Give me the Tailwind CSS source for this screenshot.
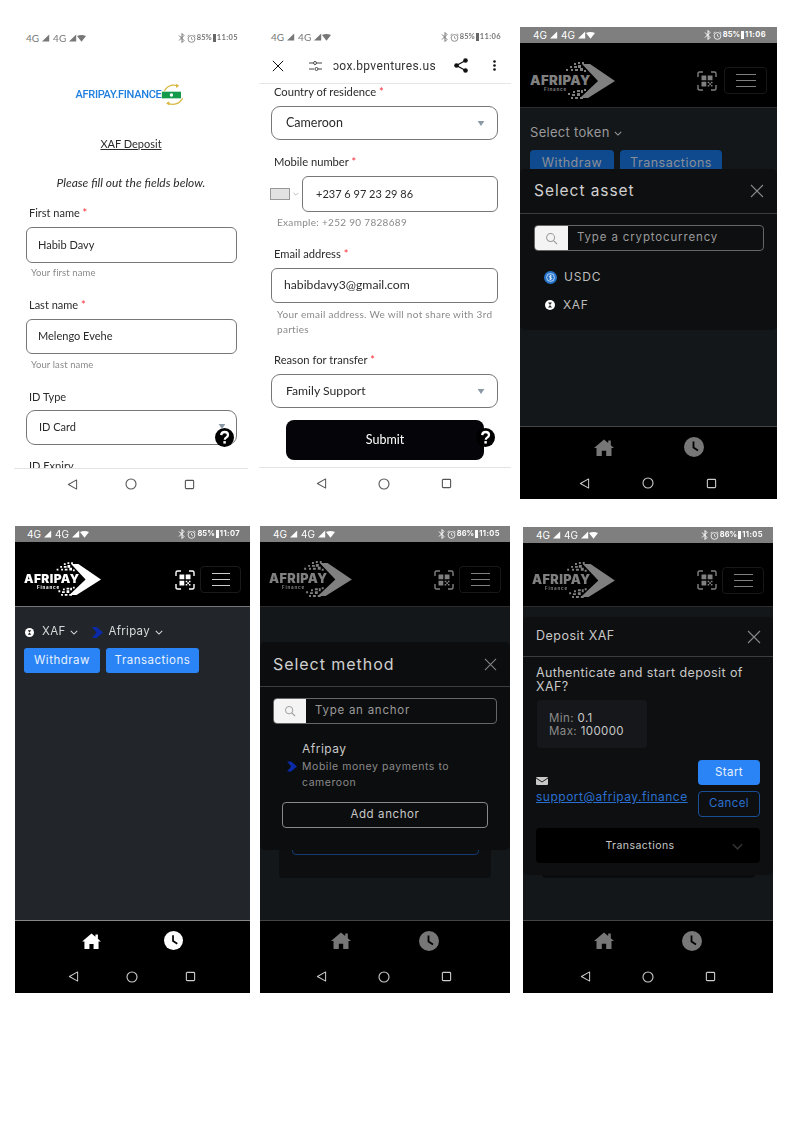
<!DOCTYPE html>
<html lang="en">
<head>
<meta charset="UTF-8">
<title>Afripay deposit flow</title>
<script src="https://cdn.jsdelivr.net/npm/@tailwindcss/browser@4"></script>
</head>
<body class="bg-white font-['Inter',sans-serif]">
<!-- shared icons -->
<svg class="hidden">
  <symbol id="sig" viewBox="0 0 10 9"><path d="M9 0v9H0z" fill="currentColor"/></symbol>
  <symbol id="wifi" viewBox="0 0 11 8"><path d="M0 1q5.500-2.500 11 0L5.500 8z" fill="currentColor"/></symbol>
  <symbol id="bt" viewBox="0 0 8 10"><path d="M1 2.500l5 5L4 9.500v-9l2 2-5 5" fill="none" stroke="currentColor" stroke-width="1"/></symbol>
  <symbol id="alarm" viewBox="0 0 10 10"><circle cx="5" cy="5.500" r="3.800" fill="none" stroke="currentColor" stroke-width=".9"/><path d="M5 3.500v2.200l1.500 .8M.5 2.500L2.500 .8M9.500 2.500L7.500 .8" fill="none" stroke="currentColor" stroke-width=".8"/></symbol>
  <symbol id="back" viewBox="0 0 12 12"><path d="M10.500 1v10L1.500 6z" fill="none" stroke="currentColor" stroke-width="1.100" stroke-linejoin="round"/></symbol>
  <symbol id="round" viewBox="0 0 12 12"><circle cx="6" cy="6" r="5" fill="none" stroke="currentColor" stroke-width="1.100"/></symbol>
  <symbol id="square" viewBox="0 0 12 12"><rect x="1.500" y="1.500" width="9" height="9" rx="1" fill="none" stroke="currentColor" stroke-width="1.200"/></symbol>
  <symbol id="home" viewBox="0 0 20 17"><path d="M10 .5L0 9h2.500v8h5.300v-5.300h4.400V17h5.300V9H20l-3.200-2.800V1.500h-2.600v2.400z" fill="currentColor"/></symbol>
  <symbol id="clock" viewBox="0 0 20 20"><circle cx="10" cy="10" r="10" fill="currentColor"/><path d="M9.500 4.500v6l4.500 3" fill="none" stroke="#000" stroke-width="1.800"/></symbol>
  <symbol id="close" viewBox="0 0 14 14"><path d="M1 1l12 12M13 1L1 13" fill="none" stroke="currentColor" stroke-width="1.100"/></symbol>
  <symbol id="search" viewBox="0 0 14 14"><circle cx="6" cy="6" r="4.300" fill="none" stroke="currentColor" stroke-width="1.100"/><path d="M9.200 9.200L13 13" stroke="currentColor" stroke-width="1.200"/></symbol>
  <symbol id="chev" viewBox="0 0 10 6"><path d="M1 1l4 4 4-4" fill="none" stroke="currentColor" stroke-width="1.300"/></symbol>
  <symbol id="caret" viewBox="0 0 8 6"><path d="M0 0h8L4 6z" fill="currentColor"/></symbol>
  <symbol id="anchor" viewBox="0 0 12 12"><path d="M0 0h5l7 6-7 6H0l5-6z" fill="#0b2aa8"/></symbol>
  <symbol id="help" viewBox="0 0 20 20"><circle cx="10" cy="10" r="10" fill="#000"/><path d="M6.500 7.500q.3-3.300 3.700-3.300t3.500 3q0 1.800-1.800 2.800-1.600 .9-1.600 2.400" fill="none" stroke="#fff" stroke-width="2.400"/><rect x="8.800" y="13.800" width="2.600" height="2.600" fill="#fff"/></symbol>
  <symbol id="xaf" viewBox="0 0 10 10"><circle cx="5" cy="5" r="5" fill="#fff"/><path d="M3 2.500h4L3 7.500h4z" fill="#222"/></symbol>
  <symbol id="usdc" viewBox="0 0 12 12"><circle cx="6" cy="6" r="6" fill="#2775ca"/><circle cx="6" cy="6" r="3.600" fill="none" stroke="#cfe0f5" stroke-width=".8"/><path d="M7.200 4.700Q6 4 5 4.800t1 1.200 1 1.300-2.300 0M6 3.500v5" fill="none" stroke="#fff" stroke-width=".6"/></symbol>
  <symbol id="qr" viewBox="0 0 20 20">
    <path d="M1 6V2.500Q1 1 2.500 1H6M14 1h3.500Q19 1 19 2.500V6M19 14v3.500q0 1.500-1.500 1.500H14M6 19H2.500Q1 19 1 17.500V14" fill="none" stroke="currentColor" stroke-width="1.400"/>
    <path d="M4.500 4.500h4.800v4.800H4.500zM10.700 4.500h4.800v4.800h-4.800zM4.500 10.700h4.800v4.800H4.500zM10.700 10.700h1.600v1.600h-1.600zM13.900 10.700h1.600v1.600h-1.600zM12.300 12.300h1.600v1.600h-1.600zM10.700 13.900h1.600v1.600h-1.600zM13.900 13.900h1.600v1.600h-1.600z" fill="currentColor"/>
  </symbol>
  <symbol id="arrow" viewBox="0 0 85 38">
    <path d="M52 2h8l25 17-27 17h-8l18-17z" fill="currentColor"/>
    <path d="M44 1h2v2h-2zM48 0h2v2h-2zM52 0h2v2h-2zM40 4h2v2h-2zM44 4h3v2h-3zM48 3h3v3h-3zM36 7h2v2h-2zM41 7h2v2h-2zM45 7h3v2h-3zM50 6h3v3h-3zM54 8h2v2h-2zM47 28h3v2h-3zM43 29h2v2h-2zM38 31h2v2h-2zM42 32h3v2h-3zM47 31h3v3h-3zM51 28h2v3h-2zM45 35h3v2h-3zM50 35h3v2h-3zM41 35h2v2h-2zM54 27h2v2h-2z" fill="currentColor"/>
  </symbol>
</svg>

<div class="w-[794px] h-[1123px] pt-[26px] overflow-hidden blur-[0.45px]">
  <!-- top row -->
  <div class="flex items-start h-[500px]">

    <!-- phone 1: deposit form -->
    <section class="ml-[14px] w-[234px] h-[473px] flex flex-col bg-white relative font-['Lato',sans-serif] text-[#2b2b2b]">
      <div class="h-6 shrink-0 flex items-center justify-between pl-[12px] pr-[10px] text-[#777]">
        <div class="flex items-center gap-[3px] text-[10px]"><span>4G</span><svg class="w-2 h-2"><use href="#sig"/></svg><span>4G</span><svg class="w-2 h-2"><use href="#sig"/></svg><svg class="w-[9px] h-[7px] -ml-[3px]"><use href="#wifi"/></svg></div>
        <div class="flex items-center gap-[1px] text-[7.500px] font-bold"><svg class="w-[8px] h-[10px]"><use href="#bt"/></svg><svg class="w-[9px] h-[9px]"><use href="#alarm"/></svg><span>85%</span><span class="w-[3px] h-[8px] bg-[#666]"></span><span class="tracking-[0.4px]">11:05</span></div>
      </div>
      <div class="flex-1 overflow-hidden">
        <div class="mt-[30px] h-[30px] flex items-center justify-center">
          <span class="font-['Roboto',sans-serif] font-medium text-[11px] text-[#1f7fe0] tracking-[-0.3px]">AFRIPAY.FINANCE</span>
          <svg class="w-[25px] h-[26px]" viewBox="0 0 30 28"><path d="M4 9Q10 0 20 3M26 18Q20 28 8 24" fill="none" stroke="#d9b843" stroke-width="1.500"/><path d="M18 .5l4 2.500-4 2.500zM10 21.500L6 24l4 2.500z" fill="#d9b843"/><rect x="1" y="10" width="23" height="8" fill="#149a4b"/><circle cx="12.500" cy="14" r="2" fill="#fff"/></svg>
        </div>
        <p class="mt-[26px] h-4 leading-4 text-center text-[11px] underline">XAF Deposit</p>
        <p class="mt-[23px] h-4 leading-4 text-center text-[12px] italic">Please fill out the fields below.</p>
        <p class="mt-[14px] ml-[15px] h-4 leading-4 text-[11px]">First name <span class="text-red-500">*</span></p>
        <div class="mt-[6px] ml-[12px] w-[211px] h-[36px] rounded-[6px] border border-[#777] flex items-center pl-[11px] text-[11px]">Habib Davy</div>
        <p class="mt-[2px] ml-[17px] h-4 leading-4 text-[9.500px] text-[#8a8a8a] tracking-[0.1px]">Your first name</p>
        <p class="mt-[16px] ml-[15px] h-4 leading-4 text-[11px]">Last name <span class="text-red-500">*</span></p>
        <div class="mt-[6px] ml-[12px] w-[211px] h-[35px] rounded-[6px] border border-[#777] flex items-center pl-[11px] text-[11px]">Melengo Evehe</div>
        <p class="mt-[3px] ml-[17px] h-4 leading-4 text-[9.500px] text-[#8a8a8a] tracking-[0.1px]">Your last name</p>
        <p class="mt-[16px] ml-[15px] h-4 leading-4 text-[11px]">ID Type</p>
        <div class="mt-[5px] ml-[12px] w-[211px] h-[35px] rounded-[9px] border border-[#777] flex items-center pl-[12px] text-[11px]">ID Card</div>
        <p class="mt-[13px] ml-[15px] h-4 leading-4 text-[11px]">ID Expiry</p>
      </div>
      <footer class="h-[31px] shrink-0 border-t border-[#e4e4e4] flex items-center pl-[53px] gap-[47px] text-[#555]">
        <svg class="w-[11px] h-[11px]"><use href="#back"/></svg><svg class="w-[12px] h-[12px]"><use href="#round"/></svg><svg class="w-[11px] h-[11px]"><use href="#square"/></svg>
      </footer>
      <svg class="absolute left-[201px] top-[402px] w-[19px] h-[19px]"><use href="#help"/></svg>
      <svg class="absolute left-[204px] top-[398px] w-[8px] h-[5px] text-[#8a97a5]"><use href="#caret"/></svg>
    </section>

    <!-- phone 2: deposit form, scrolled -->
    <section class="ml-[11px] w-[252px] h-[473px] flex flex-col bg-white relative font-['Lato',sans-serif] text-[#2b2b2b]">
      <div class="h-[22px] shrink-0 flex items-center justify-between pl-[12px] pr-[10px] text-[#777]">
        <div class="flex items-center gap-[3px] text-[10px]"><span>4G</span><svg class="w-2 h-2"><use href="#sig"/></svg><span>4G</span><svg class="w-2 h-2"><use href="#sig"/></svg><svg class="w-[9px] h-[7px] -ml-[3px]"><use href="#wifi"/></svg></div>
        <div class="flex items-center gap-[1px] text-[7.500px] font-bold"><svg class="w-[8px] h-[10px]"><use href="#bt"/></svg><svg class="w-[9px] h-[9px]"><use href="#alarm"/></svg><span>85%</span><span class="w-[3px] h-[8px] bg-[#666]"></span><span class="tracking-[0.4px]">11:06</span></div>
      </div>
      <div class="h-[36px] shrink-0 border-b border-[#e6e6e6] flex items-center pl-[13px] pr-[15px] text-[#333]">
        <svg class="w-[12px] h-[12px] text-black"><use href="#close"/></svg>
        <svg class="ml-[25px] w-[13px] h-[10px]" viewBox="0 0 13 10"><path d="M0 2h4M8 2h5M0 8h5M9 8h4" stroke="#444" fill="none"/><circle cx="6" cy="2" r="1.500" fill="none" stroke="#444"/><circle cx="7.500" cy="8" r="1.500" fill="none" stroke="#444"/></svg>
        <span class="ml-[11px] text-[12px] font-['Roboto',sans-serif] tracking-[0.35px]">ɔox.bpventures.us</span>
        <svg class="ml-[17px] w-[16px] h-[15px]" viewBox="0 0 15 15"><path d="M12 2.500L3 7.500l9 5" stroke="#111" stroke-width="1.300" fill="none"/><circle cx="12" cy="2.500" r="2.300" fill="#111"/><circle cx="3" cy="7.500" r="2.300" fill="#111"/><circle cx="12" cy="12.500" r="2.300" fill="#111"/></svg>
        <svg class="ml-auto w-[3px] h-[11px]" viewBox="0 0 3 11"><circle cx="1.500" cy="1.500" r="1.300" fill="#111"/><circle cx="1.500" cy="5.500" r="1.300" fill="#111"/><circle cx="1.500" cy="9.500" r="1.300" fill="#111"/></svg>
      </div>
      <div class="flex-1 overflow-hidden">
        <p class="ml-[15px] h-4 leading-4 text-[11.200px]">Country of residence <span class="text-red-500">*</span></p>
        <div class="mt-[6px] ml-[12px] w-[227px] h-[34px] rounded-[9px] border border-[#777] flex items-center justify-between pl-[14px] pr-[12px] text-[12.500px]">Cameroon<svg class="w-[8px] h-[5px] text-[#8a97a5]"><use href="#caret"/></svg></div>
        <p class="mt-[14px] ml-[15px] h-4 leading-4 text-[11.200px]">Mobile number <span class="text-red-500">*</span></p>
        <div class="mt-[6px] ml-[11px] h-[36px] flex items-center">
          <span class="w-[20px] h-[12px] bg-[#e2e2e2] border border-[#999]"></span>
          <svg class="ml-[3px] w-[6px] h-[4px] text-[#aaa]"><use href="#chev"/></svg>
          <div class="ml-[3px] w-[196px] h-[36px] rounded-[6px] border border-[#777] flex items-center pl-[13px] text-[11px]">+237 6 97 23 29 86</div>
        </div>
        <p class="mt-[2px] ml-[18px] h-4 leading-4 text-[10px] text-[#8a8a8a] tracking-[0.3px]">Example: +252 90 7828689</p>
        <p class="mt-[16px] ml-[15px] h-4 leading-4 text-[11.200px]">Email address <span class="text-red-500">*</span></p>
        <div class="mt-[6px] ml-[12px] w-[227px] h-[35px] rounded-[6px] border border-[#777] flex items-center pl-[12px] text-[12.200px]">habibdavy3@gmail.com</div>
        <p class="mt-[4px] ml-[18px] w-[224px] leading-[15px] text-[10px] text-[#8a8a8a] tracking-[0.3px]">Your email address. We will not share with 3rd parties</p>
        <p class="mt-[15px] ml-[15px] h-4 leading-4 text-[11.200px]">Reason for transfer <span class="text-red-500">*</span></p>
        <div class="mt-[6px] ml-[12px] w-[227px] h-[34px] rounded-[9px] border border-[#777] flex items-center justify-between pl-[14px] pr-[12px] text-[12.200px]">Family Support<svg class="w-[8px] h-[5px] text-[#8a97a5]"><use href="#caret"/></svg></div>
        <div class="mt-[12px] ml-[27px] w-[198px] h-[40px] rounded-[8px] bg-[#050509] text-white flex items-center justify-center text-[12.500px]">Submit</div>
      </div>
      <footer class="h-[32px] shrink-0 border-t border-[#e4e4e4] flex items-center pl-[57px] gap-[51px] text-[#555]">
        <svg class="w-[11px] h-[11px]"><use href="#back"/></svg><svg class="w-[12px] h-[12px]"><use href="#round"/></svg><svg class="w-[11px] h-[11px]"><use href="#square"/></svg>
      </footer>
      <svg class="absolute left-[217px] top-[402px] w-[19px] h-[19px]"><use href="#help"/></svg>
    </section>

    <!-- phone 3: select asset -->
    <section class="mt-[1px] ml-[9px] w-[257px] h-[472px] flex flex-col bg-[#14171a] text-[#9a9a9a]">
      <div class="h-4 shrink-0 bg-[#7f7f7f] text-white flex items-center justify-between pl-[13px] pr-[11px]">
        <div class="flex items-center gap-[3px] text-[10px]"><span>4G</span><svg class="w-2 h-2"><use href="#sig"/></svg><span>4G</span><svg class="w-2 h-2"><use href="#sig"/></svg><svg class="w-[9px] h-[7px] -ml-[3px]"><use href="#wifi"/></svg></div>
        <div class="flex items-center gap-[1px] text-[7.500px] font-bold"><svg class="w-[8px] h-[10px]"><use href="#bt"/></svg><svg class="w-[9px] h-[9px]"><use href="#alarm"/></svg><span>85%</span><span class="w-[3px] h-[8px] bg-white"></span><span class="tracking-[0.4px]">11:06</span></div>
      </div>
      <header class="h-[65px] shrink-0 bg-black border-b border-[#2c2c2c] flex items-center pt-[11px] pl-[10px] pr-[10px]">
        <div class="relative w-[85px] h-[38px] text-[#808080]"><svg class="absolute inset-0 w-[85px] h-[38px]"><use href="#arrow"/></svg><span class="absolute left-0 top-[11px] text-[13.200px] leading-[14px] font-black tracking-[0.4px]">AFRIPAY</span><span class="absolute left-[14px] top-[25px] text-[4.500px] leading-[6px] font-bold tracking-[0.8px]">Finance</span></div>
        <svg class="ml-auto w-[20px] h-[20px] text-[#808080]"><use href="#qr"/></svg>
        <span class="ml-[7px] w-[43px] h-[27px] rounded-[4px] border border-[#181818] flex flex-col items-center justify-center gap-[5px]"><i class="block w-[20px] h-px bg-[#808080]"></i><i class="block w-[20px] h-px bg-[#808080]"></i><i class="block w-[20px] h-px bg-[#808080]"></i></span>
      </header>
      <main class="flex-1 relative overflow-hidden">
        <div class="ml-[10px] mt-[17px] h-4 flex items-center gap-[4px] text-[13px] tracking-[0.3px]">Select token<svg class="w-[8px] h-[5px]"><use href="#chev"/></svg></div>
        <div class="ml-[10px] mt-[9px] flex gap-[6px] text-[12.500px] tracking-[0.5px] text-[#8a8f96]">
          <span class="w-[84px] h-[26px] rounded-[4px] bg-[#0f4a8f] flex items-center justify-center">Withdraw</span>
          <span class="w-[102px] h-[26px] rounded-[4px] bg-[#0f4a8f] flex items-center justify-center">Transactions</span>
        </div>
        <!-- modal -->
        <div class="absolute left-0 right-0 top-[61px] h-[161px] bg-[#0e0f10] rounded-[5px]">
          <div class="h-[45px] border-b border-[#3d3d3d] flex items-center justify-between pl-[14px] pr-[13px] text-[15.500px] text-[#d0d0d0] tracking-[0.95px]">Select asset<svg class="w-[14px] h-[14px] text-[#888]"><use href="#close"/></svg></div>
          <div class="mt-[11px] ml-[14px] w-[230px] h-[26px] flex rounded-[4px] border border-[#666] overflow-hidden">
            <span class="w-[33px] bg-[#f4f4f4] flex items-center justify-center text-[#999]"><svg class="w-[13px] h-[13px]"><use href="#search"/></svg></span>
            <span class="pl-[9px] flex items-center text-[11.500px] tracking-[0.85px] text-[#9a9a9a]">Type a cryptocurrency</span>
          </div>
          <div class="mt-[12px] ml-[24px] h-[28px] flex items-center gap-[7px] text-[12px] tracking-[0.8px] text-[#bdbdbd]"><svg class="w-[13px] h-[13px]"><use href="#usdc"/></svg>USDC</div>
          <div class="ml-[25px] h-[28px] flex items-center gap-[8px] text-[12px] tracking-[0.6px] text-[#bdbdbd]"><svg class="w-[10px] h-[10px]"><use href="#xaf"/></svg>XAF</div>
        </div>
      </main>
      <footer class="h-[73px] shrink-0 bg-black border-t border-[#444] text-[#777]">
        <div class="h-[40px] flex items-center pl-[74px] gap-[70px]"><svg class="w-[20px] h-[17px]"><use href="#home"/></svg><svg class="w-[20px] h-[20px]"><use href="#clock"/></svg></div>
        <div class="h-[32px] flex items-center pl-[59px] gap-[52px] text-[#ccc]"><svg class="w-[11px] h-[11px]"><use href="#back"/></svg><svg class="w-[12px] h-[12px]"><use href="#round"/></svg><svg class="w-[11px] h-[11px]"><use href="#square"/></svg></div>
      </footer>
    </section>
  </div>

  <!-- bottom row -->
  <div class="flex items-start">

    <!-- phone 4: wallet home -->
    <section class="ml-[15px] w-[235px] h-[467px] flex flex-col bg-[#22262b] text-[#d8d8d8]">
      <div class="h-4 shrink-0 bg-[#7a7a7a] text-white flex items-center justify-between pl-[12px] pr-[10px]">
        <div class="flex items-center gap-[3px] text-[10px]"><span>4G</span><svg class="w-2 h-2"><use href="#sig"/></svg><span>4G</span><svg class="w-2 h-2"><use href="#sig"/></svg><svg class="w-[9px] h-[7px] -ml-[3px]"><use href="#wifi"/></svg></div>
        <div class="flex items-center gap-[1px] text-[7.500px] font-bold"><svg class="w-[8px] h-[10px]"><use href="#bt"/></svg><svg class="w-[9px] h-[9px]"><use href="#alarm"/></svg><span>85%</span><span class="w-[3px] h-[8px] bg-white"></span><span class="tracking-[0.4px]">11:07</span></div>
      </div>
      <header class="h-[65px] shrink-0 bg-black border-b border-[#777] flex items-center pt-[11px] pl-[9px] pr-[9px]">
        <div class="relative w-[77px] h-[35px] text-white"><svg class="absolute inset-0 w-[77px] h-[35px]"><use href="#arrow"/></svg><span class="absolute left-0 top-[10px] text-[12px] leading-[14px] font-black tracking-[0.4px]">AFRIPAY</span><span class="absolute left-[13px] top-[23px] text-[4.500px] leading-[6px] font-bold tracking-[0.8px]">Finance</span></div>
        <svg class="ml-auto w-[20px] h-[20px] text-white"><use href="#qr"/></svg>
        <span class="ml-[5px] w-[41px] h-[27px] rounded-[4px] border border-[#1a1a1a] flex flex-col items-center justify-center gap-[5px]"><i class="block w-[18px] h-px bg-[#ccc]"></i><i class="block w-[18px] h-px bg-[#ccc]"></i><i class="block w-[18px] h-px bg-[#ccc]"></i></span>
      </header>
      <main class="flex-1">
        <div class="ml-[10px] mt-[17px] h-4 flex items-center text-[11.500px] tracking-[0.3px]">
          <svg class="w-[9px] h-[9px]"><use href="#xaf"/></svg><span class="ml-[8px]">XAF</span><svg class="ml-[5px] w-[8px] h-[5px]"><use href="#chev"/></svg>
          <svg class="ml-[14px] w-[11px] h-[13px]"><use href="#anchor"/></svg><span class="ml-[5px]">Afripay</span><svg class="ml-[5px] w-[8px] h-[5px]"><use href="#chev"/></svg>
        </div>
        <div class="ml-[9px] mt-[8px] flex gap-[6px] text-[11.500px] tracking-[0.5px] text-[#e8f1ff]">
          <span class="w-[76px] h-[25px] rounded-[3px] bg-[#2a84f5] flex items-center justify-center">Withdraw</span>
          <span class="w-[93px] h-[25px] rounded-[3px] bg-[#2a84f5] flex items-center justify-center">Transactions</span>
        </div>
      </main>
      <footer class="h-[73px] shrink-0 bg-black border-t border-[#888] text-white">
        <div class="h-[39px] flex items-center pl-[67px] gap-[63px]"><svg class="w-[19px] h-[16px]"><use href="#home"/></svg><svg class="w-[19px] h-[19px]"><use href="#clock"/></svg></div>
        <div class="h-[33px] flex items-center pl-[53px] gap-[47px] text-[#ccc]"><svg class="w-[11px] h-[11px]"><use href="#back"/></svg><svg class="w-[12px] h-[12px]"><use href="#round"/></svg><svg class="w-[11px] h-[11px]"><use href="#square"/></svg></div>
      </footer>
    </section>

    <!-- phone 5: select method -->
    <section class="ml-[10px] w-[250px] h-[467px] flex flex-col bg-[#14171a] text-[#9a9a9a]">
      <div class="h-4 shrink-0 bg-[#7f7f7f] text-white flex items-center justify-between pl-[13px] pr-[10px]">
        <div class="flex items-center gap-[3px] text-[10px]"><span>4G</span><svg class="w-2 h-2"><use href="#sig"/></svg><span>4G</span><svg class="w-2 h-2"><use href="#sig"/></svg><svg class="w-[9px] h-[7px] -ml-[3px]"><use href="#wifi"/></svg></div>
        <div class="flex items-center gap-[1px] text-[7.500px] font-bold"><svg class="w-[8px] h-[10px]"><use href="#bt"/></svg><svg class="w-[9px] h-[9px]"><use href="#alarm"/></svg><span>86%</span><span class="w-[3px] h-[8px] bg-white"></span><span class="tracking-[0.4px]">11:05</span></div>
      </div>
      <header class="h-[65px] shrink-0 bg-black border-b border-[#2c2c2c] flex items-center pt-[11px] pl-[9px] pr-[9px]">
        <div class="relative w-[83px] h-[37px] text-[#808080]"><svg class="absolute inset-0 w-[83px] h-[37px]"><use href="#arrow"/></svg><span class="absolute left-0 top-[11px] text-[12.700px] leading-[14px] font-black tracking-[0.4px]">AFRIPAY</span><span class="absolute left-[13px] top-[24px] text-[4.500px] leading-[6px] font-bold tracking-[0.8px]">Finance</span></div>
        <svg class="ml-auto w-[20px] h-[20px] text-[#808080]"><use href="#qr"/></svg>
        <span class="ml-[5px] w-[42px] h-[27px] rounded-[4px] border border-[#181818] flex flex-col items-center justify-center gap-[5px]"><i class="block w-[19px] h-px bg-[#808080]"></i><i class="block w-[19px] h-px bg-[#808080]"></i><i class="block w-[19px] h-px bg-[#808080]"></i></span>
      </header>
      <main class="flex-1 relative overflow-hidden">
        <!-- card behind the modal -->
        <div class="absolute left-[19px] top-[200px] w-[212px] h-[71px] rounded-[4px] bg-[#0c0e10]"></div>
        <div class="absolute left-[32px] top-[229px] w-[187px] h-[19px] rounded-[4px] border border-[#123a70]"></div>
        <!-- modal -->
        <div class="absolute left-0 right-0 top-[35px] h-[208px] bg-[#0c0d0e] rounded-[5px]">
          <div class="h-[45px] border-b border-[#3d3d3d] flex items-center justify-between pl-[13px] pr-[13px] text-[16px] text-[#d0d0d0] tracking-[0.95px]">Select method<svg class="w-[13px] h-[13px] text-[#888]"><use href="#close"/></svg></div>
          <div class="mt-[11px] ml-[13px] w-[224px] h-[26px] flex rounded-[4px] border border-[#666] overflow-hidden">
            <span class="w-[32px] bg-[#f4f4f4] flex items-center justify-center text-[#999]"><svg class="w-[12px] h-[12px]"><use href="#search"/></svg></span>
            <span class="pl-[9px] flex items-center text-[11.500px] tracking-[0.75px] text-[#9a9a9a]">Type an anchor</span>
          </div>
          <div class="mt-[17px] ml-[27px] flex items-center gap-[5px]">
            <svg class="w-[10px] h-[11px]"><use href="#anchor"/></svg>
            <div>
              <p class="text-[12px] leading-[16px] tracking-[0.5px] text-[#c8c8c8]">Afripay</p>
              <p class="w-[175px] mt-[2px] text-[10.500px] leading-[16px] tracking-[0.55px] text-[#8a8a8a]">Mobile money payments to cameroon</p>
            </div>
          </div>
          <div class="mt-[11px] ml-[22px] w-[206px] h-[26px] rounded-[4px] border border-[#888] flex items-center justify-center text-[11.500px] tracking-[0.6px] text-[#c8c8c8]">Add anchor</div>
        </div>
      </main>
      <footer class="h-[73px] shrink-0 bg-black border-t border-[#444] text-[#777]">
        <div class="h-[39px] flex items-center pl-[71px] gap-[68px]"><svg class="w-[20px] h-[17px]"><use href="#home"/></svg><svg class="w-[20px] h-[20px]"><use href="#clock"/></svg></div>
        <div class="h-[33px] flex items-center pl-[56px] gap-[51px] text-[#ccc]"><svg class="w-[11px] h-[11px]"><use href="#back"/></svg><svg class="w-[12px] h-[12px]"><use href="#round"/></svg><svg class="w-[11px] h-[11px]"><use href="#square"/></svg></div>
      </footer>
    </section>

    <!-- phone 6: deposit dialog -->
    <section class="mt-[1px] ml-[13px] w-[250px] h-[466px] flex flex-col bg-[#14171a] text-[#9a9a9a]">
      <div class="h-4 shrink-0 bg-[#7f7f7f] text-white flex items-center justify-between pl-[13px] pr-[10px]">
        <div class="flex items-center gap-[3px] text-[10px]"><span>4G</span><svg class="w-2 h-2"><use href="#sig"/></svg><span>4G</span><svg class="w-2 h-2"><use href="#sig"/></svg><svg class="w-[9px] h-[7px] -ml-[3px]"><use href="#wifi"/></svg></div>
        <div class="flex items-center gap-[1px] text-[7.500px] font-bold"><svg class="w-[8px] h-[10px]"><use href="#bt"/></svg><svg class="w-[9px] h-[9px]"><use href="#alarm"/></svg><span>86%</span><span class="w-[3px] h-[8px] bg-white"></span><span class="tracking-[0.4px]">11:05</span></div>
      </div>
      <header class="h-[64px] shrink-0 bg-black border-b border-[#2c2c2c] flex items-center pt-[11px] pl-[9px] pr-[9px]">
        <div class="relative w-[83px] h-[37px] text-[#808080]"><svg class="absolute inset-0 w-[83px] h-[37px]"><use href="#arrow"/></svg><span class="absolute left-0 top-[11px] text-[12.700px] leading-[14px] font-black tracking-[0.4px]">AFRIPAY</span><span class="absolute left-[13px] top-[24px] text-[4.500px] leading-[6px] font-bold tracking-[0.8px]">Finance</span></div>
        <svg class="ml-auto w-[20px] h-[20px] text-[#808080]"><use href="#qr"/></svg>
        <span class="ml-[5px] w-[42px] h-[27px] rounded-[4px] border border-[#181818] flex flex-col items-center justify-center gap-[5px]"><i class="block w-[19px] h-px bg-[#808080]"></i><i class="block w-[19px] h-px bg-[#808080]"></i><i class="block w-[19px] h-px bg-[#808080]"></i></span>
      </header>
      <main class="flex-1 relative overflow-hidden">
        <div class="absolute left-[19px] top-[249px] w-[213px] h-[22px] rounded-[4px] bg-[#0a0b0c]"></div>
        <!-- modal -->
        <div class="absolute left-0 right-0 top-[10px] h-[258px] bg-[#0e0f10] rounded-[5px]">
          <div class="h-[40px] border-b border-[#3d3d3d] flex items-center justify-between pl-[13px] pr-[12px] text-[12.500px] text-[#c8c8c8] tracking-[0.5px]">Deposit XAF<svg class="w-[14px] h-[14px] text-[#888]"><use href="#close"/></svg></div>
          <p class="mt-[9px] mx-[13px] text-[12.500px] leading-[14px] tracking-[0.4px] text-[#c8c8c8]">Authenticate and start deposit of XAF?</p>
          <div class="mt-[6px] ml-[14px] w-[110px] h-[48px] rounded-[4px] bg-[#15171a] pl-[12px] pt-[2px] flex flex-col justify-center text-[11.500px] leading-[13px] tracking-[0.4px] text-[#8a8a8a]">
            <p>Min: <span class="text-[#c8c8c8]">0.1</span></p>
            <p>Max: <span class="text-[#c8c8c8]">100000</span></p>
          </div>
          <div class="mt-[12px] ml-[13px] w-[224px] flex items-end justify-between">
            <div class="pb-[13px]">
              <svg class="w-[12px] h-[8px] mb-[4px]" viewBox="0 0 12 8"><rect width="12" height="8" rx="1" fill="#c8c8c8"/><path d="M0 1l6 4 6-4" fill="none" stroke="#0e0f10" stroke-width=".9"/></svg>
              <a class="block text-[12px] leading-[15px] tracking-[0.5px] text-[#2a6fd0] underline">support@afripay.finance</a>
            </div>
            <div class="flex flex-col gap-[6px] text-[11.500px] tracking-[0.4px]">
              <span class="w-[62px] h-[25px] rounded-[4px] bg-[#2a84f5] text-[#e8f1ff] flex items-center justify-center">Start</span>
              <span class="w-[62px] h-[26px] rounded-[4px] border border-[#1a4f96] text-[#2a6fd0] flex items-center justify-center">Cancel</span>
            </div>
          </div>
          <div class="mt-[11px] ml-[13px] w-[224px] h-[35px] pr-[16px] rounded-[4px] bg-black relative flex items-center justify-center text-[10.500px] tracking-[0.45px] text-[#c8c8c8]">Transactions<svg class="absolute right-[16px] top-[15px] w-[13px] h-[7px] text-[#333]"><use href="#chev"/></svg></div>
        </div>
      </main>
      <footer class="h-[73px] shrink-0 bg-black border-t border-[#444] text-[#777]">
        <div class="h-[39px] flex items-center pl-[71px] gap-[68px]"><svg class="w-[20px] h-[17px]"><use href="#home"/></svg><svg class="w-[20px] h-[20px]"><use href="#clock"/></svg></div>
        <div class="h-[33px] flex items-center pl-[57px] gap-[51px] text-[#ccc]"><svg class="w-[11px] h-[11px]"><use href="#back"/></svg><svg class="w-[12px] h-[12px]"><use href="#round"/></svg><svg class="w-[11px] h-[11px]"><use href="#square"/></svg></div>
      </footer>
    </section>
  </div>
</div>
</body>
</html>
